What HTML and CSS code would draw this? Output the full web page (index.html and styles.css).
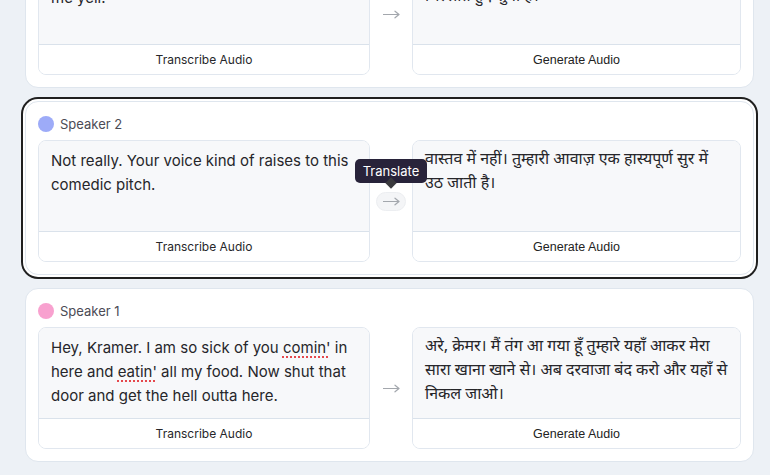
FILE: index.html
```html
<!DOCTYPE html>
<html lang="en">
<head>
<meta charset="utf-8">
<title>Dialogue translation</title>
<link rel="stylesheet" href="styles.css">
</head>
<body>
<main class="list">
  <section class="card">
    <div class="speaker"><span class="dot dot-pink"></span>Speaker 1</div>
    <div class="row">
      <div class="box">
        <div class="text">I swear it's so much funnier when you let<br>me yell.</div>
        <button class="action">Transcribe Audio</button>
      </div>
      <div class="arrow-col">
        <span class="arrow"><svg width="17" height="9" viewBox="0 0 17 9"><path d="M0.5 4.5H16M12 1.2L16 4.5L12 7.8" fill="none" stroke="currentColor" stroke-width="1.2" stroke-linecap="round" stroke-linejoin="round"/></svg></span>
      </div>
      <div class="box hi">
        <div class="text" lang="hi">क्या तुमने कभी खुद को उस तरह मज़ाक में<br>चिल्लाते हुए सुना है।</div>
        <button class="action action-hi">Generate Audio</button>
      </div>
    </div>
  </section>

  <section class="card card-active">
    <div class="speaker"><span class="dot dot-blue"></span>Speaker 2</div>
    <div class="row">
      <div class="box">
        <div class="text">Not really. Your voice kind of raises to this comedic pitch.</div>
        <button class="action">Transcribe Audio</button>
      </div>
      <div class="arrow-col">
        <span class="arrow arrow-hover"><svg width="17" height="9" viewBox="0 0 17 9"><path d="M0.5 4.5H16M12 1.2L16 4.5L12 7.8" fill="none" stroke="currentColor" stroke-width="1.2" stroke-linecap="round" stroke-linejoin="round"/></svg></span>
        <span class="tooltip">Translate</span>
        <span class="tip-caret"></span>
      </div>
      <div class="box hi">
        <div class="text" lang="hi">वास्तव में नहीं। तुम्हारी आवाज़ एक हास्यपूर्ण सुर में उठ जाती है।</div>
        <button class="action action-hi">Generate Audio</button>
      </div>
    </div>
  </section>

  <section class="card">
    <div class="speaker"><span class="dot dot-pink"></span>Speaker 1</div>
    <div class="row">
      <div class="box">
        <div class="text">Hey, Kramer. I am so sick of you <span class="typo">comin'</span> in here and <span class="typo">eatin'</span> all my food. Now shut that door and get the hell outta here.</div>
        <button class="action">Transcribe Audio</button>
      </div>
      <div class="arrow-col">
        <span class="arrow"><svg width="17" height="9" viewBox="0 0 17 9"><path d="M0.5 4.5H16M12 1.2L16 4.5L12 7.8" fill="none" stroke="currentColor" stroke-width="1.2" stroke-linecap="round" stroke-linejoin="round"/></svg></span>
      </div>
      <div class="box hi">
        <div class="text" lang="hi">अरे, क्रेमर। मैं तंग आ गया हूँ तुम्हारे यहाँ आकर मेरा सारा खाना खाने से। अब दरवाजा बंद करो और यहाँ से निकल जाओ।</div>
        <button class="action action-hi">Generate Audio</button>
      </div>
    </div>
  </section>
</main>
</body>
</html>
```
FILE: styles.css
```css
* { box-sizing: border-box; }

html, body {
  margin: 0;
  padding: 0;
  height: 100%;
  overflow: hidden;
}

body {
  background: #edf1f6;
  font-family: Inter, "Noto Sans", sans-serif;
  color: #27272a;
}

.list {
  display: flex;
  flex-direction: column;
  gap: 13px;
  width: 729px;
  margin: -86px 0 0 25px;
}

.card {
  background: #ffffff;
  border: 1px solid #dfe6ee;
  border-radius: 13px;
  padding: 12px;
  height: 174px;
}

.card-active {
  box-shadow: 0 0 0 2px #ffffff, 0 0 0 4px #1f1f1f;
}

.speaker {
  display: flex;
  align-items: center;
  gap: 6px;
  height: 20px;
  margin-top: 0;
  margin-bottom: 6px;
  font-size: 13px;
  color: #4b4b55;
}

.dot {
  width: 16px;
  height: 16px;
  border-radius: 50%;
  flex: none;
}

.dot-blue { background: #9dabf8; }
.dot-pink { background: #f8a1cf; }

.row {
  display: grid;
  grid-template-columns: 332px 42px 1fr;
  height: 122px;
}

.box {
  display: flex;
  flex-direction: column;
  border: 1px solid #e1e7ef;
  border-radius: 8px;
  overflow: hidden;
  background: #ffffff;
}

.text {
  flex: 1;
  background: #f7f8fa;
  padding: 8px 12px 0 12px;
  font-size: 15px;
  line-height: 24px;
  color: #26262a;
  overflow: hidden;
}

.hi .text {
  font-family: "Noto Sans Devanagari", "Lohit Devanagari", "FreeSans", "Noto Sans", sans-serif;
  font-size: 16px;
}

.typo {
  text-decoration-line: underline;
  text-decoration-style: dotted;
  text-decoration-color: #e5484d;
  text-decoration-thickness: 2px;
  text-underline-offset: 3px;
}

.action {
  flex: none;
  height: 30px;
  border: 0;
  border-top: 1px solid #dae2eb;
  background: #ffffff;
  font-family: Inter, sans-serif;
  font-size: 12px;
  color: #27272a;
  padding: 0;
  cursor: pointer;
}

.action-hi {
  font-family: "Liberation Sans", Arial, sans-serif;
  font-size: 12.5px;
  color: #222222;
}

.arrow-col {
  position: relative;
  display: flex;
  align-items: center;
  justify-content: center;
}

.arrow {
  display: flex;
  align-items: center;
  justify-content: center;
  width: 30px;
  height: 19px;
  color: #a3a7ad;
  border-radius: 10px;
  border: 1px solid transparent;
}

.arrow svg { display: block; }

.arrow-hover {
  background: #f4f5f7;
  border-color: #eceef1;
}

.tooltip {
  position: absolute;
  left: -15px;
  top: 19px;
  width: 72px;
  height: 24px;
  border-radius: 5px;
  background: #28233a;
  color: #ffffff;
  font-size: 13px;
  line-height: 24px;
  text-align: center;
  z-index: 2;
}

.tip-caret {
  position: absolute;
  left: 17px;
  top: 39px;
  width: 8px;
  height: 8px;
  background: #3a3a3e;
  transform: rotate(45deg);
  z-index: 3;
}
```
